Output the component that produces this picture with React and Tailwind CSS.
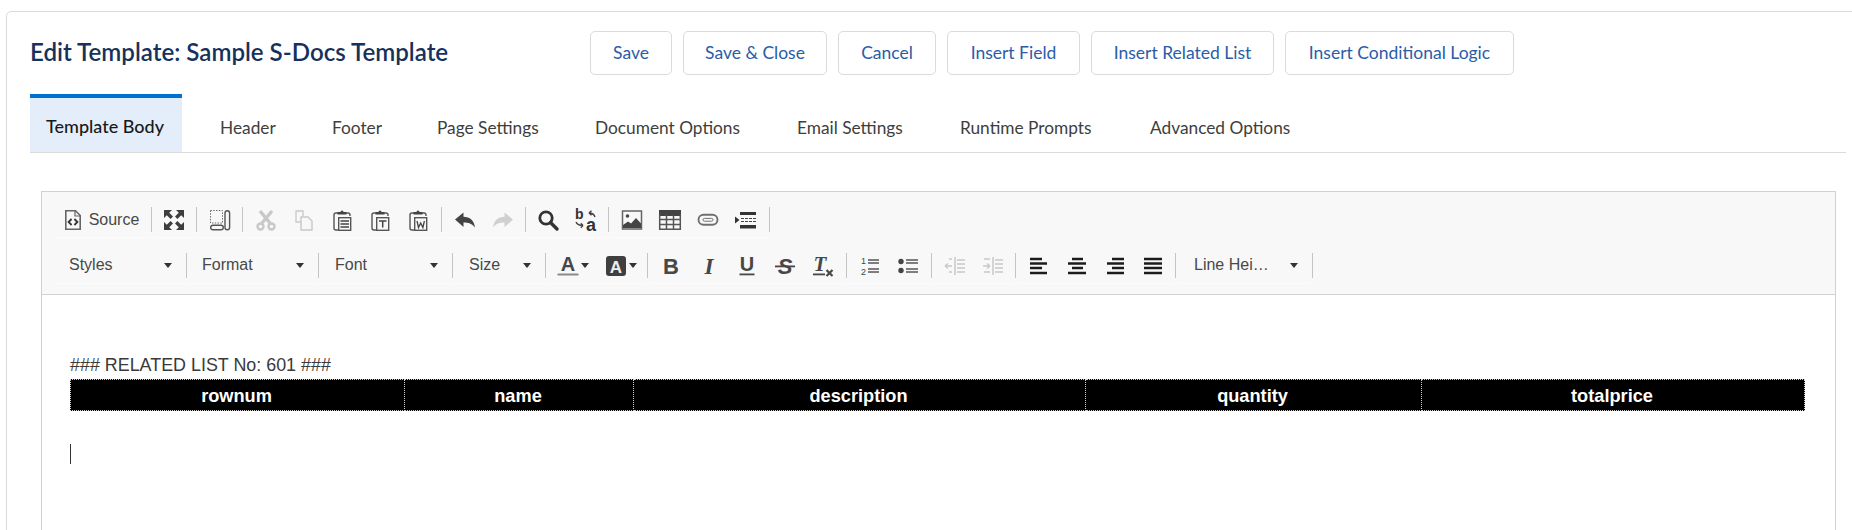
import React from 'react';

const INK = '#474747';
const OFF = '#c8c8c8';

// toolbar icons, all drawn in a 24x24 box
function Ico({ children }) {
  return (
    <svg width="24" height="24" viewBox="0 0 24 24" fill="none" className="block shrink-0 overflow-visible">
      {children}
    </svg>
  );
}

const SourceIcon = () => (
  <Ico>
    <path d="M4.8 2.8h9.7L19.2 7.5v13.7H4.8z" stroke="#666" strokeWidth="1.6" />
    <path d="M14 3v5h5" stroke="#666" strokeWidth="1.2" />
    <path d="M10.6 11l-3 3 3 3M13.4 11l3 3-3 3" stroke="#333" strokeWidth="1.8" />
  </Ico>
);

const Corner = ({ t }) => <path transform={t} d="M2 2h8L7.2 4.8 11 8.6 8.6 11 4.8 7.2 2 10z" fill="#3e3e3e" />;
const MaximizeIcon = () => (
  <Ico>
    <Corner t="" />
    <Corner t="translate(24 0) scale(-1 1)" />
    <Corner t="translate(0 24) scale(1 -1)" />
    <Corner t="translate(24 24) scale(-1 -1)" />
  </Ico>
);

const BlocksIcon = () => (
  <Ico>
    <rect x="2.5" y="2.5" width="12" height="12.5" stroke="#666" strokeWidth="1" strokeDasharray="1.4 1.4" />
    <rect x="2.7" y="17.2" width="12.6" height="4.6" rx="2.3" stroke="#555" strokeWidth="1.4" />
    <rect x="17" y="2.7" width="4.6" height="19" rx="2.3" stroke="#555" strokeWidth="1.4" />
  </Ico>
);

const CutIcon = () => (
  <Ico>
    <path d="M6 3l10 12M18 3L8 15" stroke={OFF} strokeWidth="3.4" />
    <circle cx="6.5" cy="18.5" r="3" stroke={OFF} strokeWidth="2.4" />
    <circle cx="17.5" cy="18.5" r="3" stroke={OFF} strokeWidth="2.4" />
  </Ico>
);

const CopyIcon = () => (
  <Ico>
    <path d="M9 14H4V3h7v5" stroke={OFF} strokeWidth="1.3" />
    <path d="M9 9h7l4 4v9H9z" stroke={OFF} strokeWidth="1.4" />
  </Ico>
);

const PasteBase = ({ children }) => (
  <Ico>
    <path d="M8 5H6a2 2 0 0 0-2 2v13a2 2 0 0 0 2 2h2M16 5h2a2 2 0 0 1 2 2v1" stroke="#555" strokeWidth="1.4" />
    <path d="M7.500 6.500V4h3a1.500 1.500 0 0 1 3 0h3v2.500z" fill="#444" />
    <rect x="8.700" y="9.700" width="12" height="12.600" stroke="#555" strokeWidth="1.400" fill="#f8f8f8" />
    {children}
  </Ico>
);
const PasteIcon = () => (
  <PasteBase>
    <path d="M10.500 13h8.500M10.500 16h8.500M10.500 19h8.500" stroke="#444" strokeWidth="1.300" />
  </PasteBase>
);
const PasteTextIcon = () => (
  <PasteBase>
    <path d="M11 13h7.500M14.700 13v6.500" stroke="#444" strokeWidth="1.500" />
  </PasteBase>
);
const PasteWordIcon = () => (
  <PasteBase>
    <path d="M11 13l1.500 6.500 2.200-4.500 2.200 4.500 1.500-6.500" stroke="#444" strokeWidth="1.300" />
  </PasteBase>
);

const UndoIcon = () => (
  <Ico>
    <path d="M2 11.500 10.500 4.500v4.300c6.500 0 10.500 3.700 11.500 10.700-3-4-6.500-5-11.500-5v4.500z" fill="#444" />
  </Ico>
);
const RedoIcon = () => (
  <Ico>
    <path d="M22 11.500 13.500 4.500v4.300C7 8.800 3 12.500 2 19.500c3-4 6.500-5 11.500-5v4.500z" fill="#d0d0d0" />
  </Ico>
);

const FindIcon = () => (
  <Ico>
    <circle cx="10" cy="10" r="6.200" stroke="#333" strokeWidth="2.800" />
    <path d="M14.500 14.500 21 21" stroke="#333" strokeWidth="3.400" strokeLinecap="round" />
  </Ico>
);

const ReplaceIcon = () => (
  <Ico>
    <text x="1" y="11" fontFamily="Liberation Sans" fontWeight="700" fontSize="14" fill="#333">b</text>
    <text x="12" y="23" fontFamily="Liberation Sans" fontWeight="700" fontSize="18" fill="#333">a</text>
    <path d="M21 9c-.8-2.500-3-4-6-4M15 5l2.500-2.200M15 5l2.500 2.200M2 14c1 2.500 3 3.500 7 3.500M9 17.500 6.800 15.300M9 17.500 6.800 19.700" stroke="#444" strokeWidth="1.400" />
  </Ico>
);

const ImageIcon = () => (
  <Ico>
    <rect x="2.500" y="3" width="19" height="18" stroke="#666" strokeWidth="1.500" />
    <circle cx="7.500" cy="8" r="1.800" fill="#444" />
    <path d="M3 20v-3l5-3.500 3 2 5-5.500 5 5.500V20z" fill="#444" />
  </Ico>
);

const TableIcon = () => (
  <Ico>
    <rect x="1" y="2" width="22" height="6" fill="#444" />
    <path d="M1.700 6v15.300h20.600V6M8.500 7v14M15.500 7v14M2 11.500h20M2 16.500h20" stroke="#555" strokeWidth="1.500" />
  </Ico>
);

const LinkIcon = () => (
  <Ico>
    <rect x="2.500" y="6.800" width="19" height="10" rx="5" stroke="#707070" strokeWidth="1.900" />
    <rect x="7" y="10.400" width="10" height="2.800" rx="1.400" stroke="#707070" strokeWidth="1" />
  </Ico>
);

const BreakIcon = () => (
  <Ico>
    <path d="M1 8.500 5.500 12 1 15.500z" fill="#333" />
    <path d="M6 4h16v3H6zM6 17h16v3.500H6z" fill="#333" />
    <path d="M7 10.500h15M7 13.500h15" stroke="#444" strokeWidth="1" strokeDasharray="3 1" />
  </Ico>
);

const Letter = ({ children, italic, serif, x = 12, y = 20, size = 22 }) => (
  <text
    x={x}
    y={y}
    textAnchor="middle"
    fontFamily={serif ? 'Liberation Serif' : 'Liberation Sans'}
    fontWeight="700"
    fontStyle={italic ? 'italic' : 'normal'}
    fontSize={size}
    fill={INK}
  >
    {children}
  </text>
);

const ColorIcon = () => (
  <Ico>
    <Letter y={17} size={20}>A</Letter>
    <rect x="1.500" y="19.500" width="21" height="2" fill="#8a8a8a" />
  </Ico>
);
const BgColorIcon = () => (
  <Ico>
    <rect x="2" y="2" width="20" height="20" rx="3" fill="#3f3f3f" />
    <text x="12" y="18.500" textAnchor="middle" fontFamily="Liberation Sans" fontWeight="700" fontSize="17" fill="#eee">A</text>
  </Ico>
);
const BoldIcon = () => <Ico><Letter>B</Letter></Ico>;
const ItalicIcon = () => <Ico><Letter italic serif size={23}>I</Letter></Ico>;
const UnderlineIcon = () => (
  <Ico>
    <Letter y={17} size={20}>U</Letter>
    <rect x="4.500" y="19.500" width="15" height="1.800" fill={INK} />
  </Ico>
);
const StrikeIcon = () => (
  <Ico>
    <Letter italic>S</Letter>
    <rect x="2" y="11.500" width="20" height="1.800" fill={INK} />
  </Ico>
);
const ClearIcon = () => (
  <Ico>
    <Letter italic serif x={9} y={17} size={21}>T</Letter>
    <rect x="2" y="19.500" width="12" height="1.800" fill={INK} />
    <path d="M15.500 16l6 6M21.500 16l-6 6" stroke={INK} strokeWidth="2.200" />
  </Ico>
);

const OlIcon = () => (
  <Ico>
    <text x="3" y="10" fontFamily="Liberation Sans" fontSize="9" fill="#444">1</text>
    <text x="3" y="21" fontFamily="Liberation Sans" fontSize="9" fill="#444">2</text>
    <path d="M10 6h11M10 9h11M10 15h11M10 18h11" stroke="#555" strokeWidth="1.500" />
  </Ico>
);
const UlIcon = () => (
  <Ico>
    <circle cx="5" cy="7.500" r="2.700" fill="#444" />
    <circle cx="5" cy="16.500" r="2.700" fill="#444" />
    <path d="M10 6h12M10 9h12M10 15h12M10 18h12" stroke="#555" strokeWidth="1.500" />
  </Ico>
);
const OutdentIcon = () => (
  <Ico>
    <path d="M12 3v18" stroke={OFF} strokeWidth="1.500" />
    <path d="M14 6h8M14 10h8M14 14h8M14 18h8M6 5h3M6 18h3" stroke={OFF} strokeWidth="1.300" />
    <path d="M2 12h7M2 12l3-2.500M2 12l3 2.500" stroke={OFF} strokeWidth="1.300" />
  </Ico>
);
const IndentIcon = () => (
  <Ico>
    <path d="M12 3v18" stroke={OFF} strokeWidth="1.500" />
    <path d="M14 6h8M14 10h8M14 14h8M14 18h8M3 5h6M3 18h6" stroke={OFF} strokeWidth="1.300" />
    <path d="M2 12h7M9 12l-3-2.500M9 12l-3 2.500" stroke={OFF} strokeWidth="1.300" />
  </Ico>
);

const Lines = ({ d }) => (
  <Ico>
    <path d={d} stroke="#1c1c1c" strokeWidth="2.400" />
  </Ico>
);
const AlignLeft = () => <Lines d="M3 5h12M3 9.500h17M3 14h12M3 19h17" />;
const AlignCenter = () => <Lines d="M7 5h11M3 9.500h18M7 14h11M3 19h18" />;
const AlignRight = () => <Lines d="M9 5h12M4 9.500h17M9 14h12M4 19h17" />;
const AlignJustify = () => <Lines d="M3 5h18M3 9.500h18M3 14h18M3 19h18" />;

const Caret = () => (
  <svg width="8" height="5" viewBox="0 0 8 5" className="block shrink-0">
    <path d="M0 0h8L4 5z" fill="#333" />
  </svg>
);

const Sep = () => <div className="w-px h-[25px] bg-[#c4c4c4] shrink-0" />;

function Tool({ children }) {
  return <div className="w-[38px] h-[25px] flex items-center justify-center shrink-0">{children}</div>;
}

function Group({ width, children }) {
  return (
    <div className={`${width} h-[31px] pb-[5px] border-b border-[#fcfcfc] rounded-b-[3px] flex justify-center items-center shrink-0`}>
      {children}
    </div>
  );
}

function Combo({ label, width, pad }) {
  return (
    <div className={`${width} ${pad} pr-[14px] h-[31px] pb-[5px] border-b border-[#fcfcfc] rounded-b-[3px] flex items-center justify-between shrink-0 text-[16px] text-[#484848]`}>
      <span className="-mt-[2px]">{label}</span>
      <Caret />
    </div>
  );
}

function ColorTool({ children }) {
  return (
    <div className="w-[48px] h-[25px] flex items-center justify-center gap-[1px] shrink-0">
      {children}
      <Caret />
    </div>
  );
}

function Toolbar() {
  return (
    <div className="bg-[#f8f8f8] border-b border-[#d1d1d1] pl-[12px] pt-[15px] pb-[10px] font-['Liberation_Sans',sans-serif]">
      <div className="flex items-start">
        <Group width="w-[97px]">
          <div className="flex items-center gap-[4px] text-[16px] text-[#484848] pr-[5px]">
            <SourceIcon />
            <span>Source</span>
          </div>
        </Group>
        <Sep />
        <Group width="w-[44px]"><Tool><MaximizeIcon /></Tool></Group>
        <Sep />
        <Group width="w-[45px]"><Tool><BlocksIcon /></Tool></Group>
        <Sep />
        <Group width="w-[198px]">
          <Tool><CutIcon /></Tool>
          <Tool><CopyIcon /></Tool>
          <Tool><PasteIcon /></Tool>
          <Tool><PasteTextIcon /></Tool>
          <Tool><PasteWordIcon /></Tool>
        </Group>
        <Sep />
        <Group width="w-[83px]">
          <Tool><UndoIcon /></Tool>
          <Tool><RedoIcon /></Tool>
        </Group>
        <Sep />
        <Group width="w-[82px]">
          <Tool><FindIcon /></Tool>
          <Tool><ReplaceIcon /></Tool>
        </Group>
        <Sep />
        <Group width="w-[160px]">
          <Tool><ImageIcon /></Tool>
          <Tool><TableIcon /></Tool>
          <Tool><LinkIcon /></Tool>
          <Tool><BreakIcon /></Tool>
        </Group>
        <Sep />
      </div>
      <div className="flex items-start mt-[15px]">
        <Combo label="Styles" width="w-[132px]" pad="pl-[15px]" />
        <Sep />
        <Combo label="Format" width="w-[131px]" pad="pl-[15px]" />
        <Sep />
        <Combo label="Font" width="w-[133px]" pad="pl-[16px]" />
        <Sep />
        <Combo label="Size" width="w-[92px]" pad="pl-[16px]" />
        <Sep />
        <Group width="w-[101px]">
          <ColorTool><ColorIcon /></ColorTool>
          <ColorTool><BgColorIcon /></ColorTool>
        </Group>
        <Sep />
        <Group width="w-[198px]">
          <Tool><BoldIcon /></Tool>
          <Tool><ItalicIcon /></Tool>
          <Tool><UnderlineIcon /></Tool>
          <Tool><StrikeIcon /></Tool>
          <Tool><ClearIcon /></Tool>
        </Group>
        <Sep />
        <Group width="w-[84px]">
          <Tool><OlIcon /></Tool>
          <Tool><UlIcon /></Tool>
        </Group>
        <Sep />
        <Group width="w-[83px]">
          <Tool><OutdentIcon /></Tool>
          <Tool><IndentIcon /></Tool>
        </Group>
        <Sep />
        <Group width="w-[159px]">
          <Tool><AlignLeft /></Tool>
          <Tool><AlignCenter /></Tool>
          <Tool><AlignRight /></Tool>
          <Tool><AlignJustify /></Tool>
        </Group>
        <Sep />
        <Combo label="Line Hei…" width="w-[136px]" pad="pl-[18px]" />
        <Sep />
      </div>
    </div>
  );
}

const columns = [
  { name: 'rownum', width: 'w-[334px]' },
  { name: 'name', width: 'w-[229px]' },
  { name: 'description', width: 'w-[452px]' },
  { name: 'quantity', width: 'w-[336px]' },
  { name: 'totalprice', width: 'w-[383px]' },
];

const buttons = [
  { label: 'Save', width: 'w-[82px]' },
  { label: 'Save & Close', width: 'w-[144px]' },
  { label: 'Cancel', width: 'w-[98px]' },
  { label: 'Insert Field', width: 'w-[133px]' },
  { label: 'Insert Related List', width: 'w-[183px]' },
  { label: 'Insert Conditional Logic', width: 'w-[229px]' },
];

const tabs = [
  { label: 'Header', width: 'w-[112px]' },
  { label: 'Footer', width: 'w-[105px]' },
  { label: 'Page Settings', width: 'w-[158px]' },
  { label: 'Document Options', width: 'w-[202px]' },
  { label: 'Email Settings', width: 'w-[163px]' },
  { label: 'Runtime Prompts', width: 'w-[190px]' },
  { label: 'Advanced Options', width: 'w-[160px]' },
];

export default function App() {
  return (
    <div className="h-[530px] overflow-hidden bg-white font-['Lato',sans-serif]">
      <div className="ml-[6px] mt-[11px] w-[1860px] h-[600px] border border-[#dddbda] rounded-[5px] pt-[19px] pl-[23px]">
        <div className="flex items-center">
          <h1 className="w-[560px] pb-[2px] text-[24.1px] leading-[32px] font-semibold text-[#16325c]">Edit Template: Sample S-Docs Template</h1>
          <div className="flex gap-[11px]">
            {buttons.map((b) => (
              <button key={b.label} className={`${b.width} h-[44px] bg-white border border-[#dddbda] rounded-[5px] text-[17.5px] text-[#2a5ca8]`}>
                {b.label}
              </button>
            ))}
          </div>
        </div>

        <div className="mt-[19px] w-[1816px] h-[59px] border-b border-[#dddbda] flex text-[17.3px] text-[#3e3e3c]">
          <div className="w-[152px] h-[58px] pt-[2px] pr-[2px] border-t-4 border-[#0070d2] bg-[#e4eefa] flex items-center justify-center text-[18px] font-medium text-[#181818]">
            Template Body
          </div>
          <div className="flex items-center ml-[38px] h-[58px] pt-[10px]">
            {tabs.map((t) => (
              <div key={t.label} className={t.width}>{t.label}</div>
            ))}
          </div>
        </div>

        <div className="mt-[38px] ml-[11px] w-[1795px] h-[400px] border border-[#d1d1d1] font-['Liberation_Sans',sans-serif]">
          <Toolbar />
          <div className="pl-[28px] pt-[60px] text-[18.2px] text-[#333]">
            <p className="leading-[20px] text-[17.9px] text-[#3a3a3a]">### RELATED LIST No: 601 ###</p>
            <table className="mt-[4px] w-[1734px] h-[32px] table-fixed border-collapse bg-black text-white">
              <thead>
                <tr>
                  {columns.map((c) => (
                    <th key={c.name} className={`${c.width} p-0 pr-[2px] pt-[2px] text-center font-bold leading-[20px] border border-dotted border-[#d3d3d3]`}>
                      {c.name}
                    </th>
                  ))}
                </tr>
              </thead>
            </table>
            <div className="mt-[33px] w-px h-[20px] bg-[#333]" />
          </div>
        </div>
      </div>
    </div>
  );
}
